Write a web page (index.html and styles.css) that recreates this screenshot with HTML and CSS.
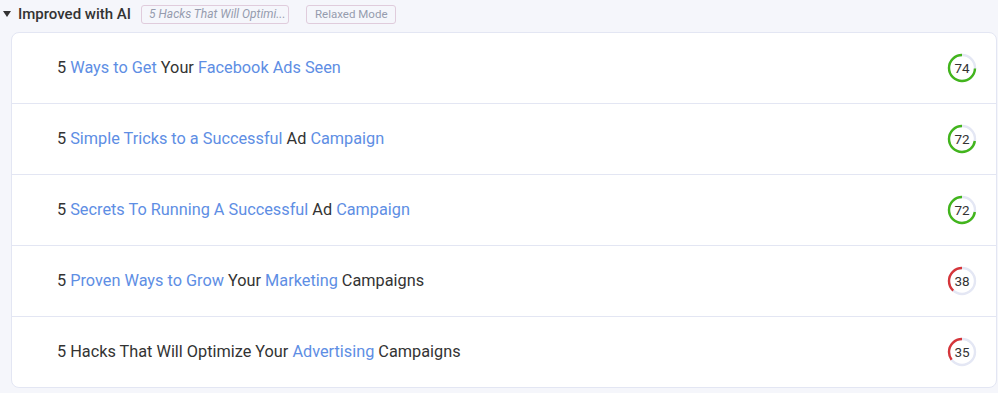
FILE: index.html
```html
<!DOCTYPE html>
<html lang="en">
<head>
    <meta charset="UTF-8">
    <meta name="viewport" content="width=device-width, initial-scale=1.0">
    <title>Improved with AI</title>
    <link rel="stylesheet" href="styles.css">
</head>
<body>

    <div class="head">
        <span class="caret"></span>
        <h3 class="title">Improved with AI</h3>
        <span class="tag tag-source">5 Hacks That Will Optimi...</span>
        <span class="tag tag-mode">Relaxed Mode</span>
    </div>

    <div class="card">
        <div class="row">
            <p class="headline">5 <b>Ways to Get</b> Your <b>Facebook Ads Seen</b></p>
            <div class="score good">
                <svg viewBox="0 0 30 30"><circle class="track" cx="15" cy="15" r="13"/><circle class="bar" cx="15" cy="15" r="13" style="stroke-dasharray: 60.4 81.7"/></svg>
                <span>74</span>
            </div>
        </div>
        <div class="row">
            <p class="headline">5 <b>Simple Tricks to a Successful</b> Ad <b>Campaign</b></p>
            <div class="score good">
                <svg viewBox="0 0 30 30"><circle class="track" cx="15" cy="15" r="13"/><circle class="bar" cx="15" cy="15" r="13" style="stroke-dasharray: 58.8 81.7"/></svg>
                <span>72</span>
            </div>
        </div>
        <div class="row">
            <p class="headline">5 <b>Secrets To Running A Successful</b> Ad <b>Campaign</b></p>
            <div class="score good">
                <svg viewBox="0 0 30 30"><circle class="track" cx="15" cy="15" r="13"/><circle class="bar" cx="15" cy="15" r="13" style="stroke-dasharray: 58.8 81.7"/></svg>
                <span>72</span>
            </div>
        </div>
        <div class="row">
            <p class="headline">5 <b>Proven Ways to Grow</b> Your <b>Marketing</b> Campaigns</p>
            <div class="score bad">
                <svg viewBox="0 0 30 30"><circle class="track" cx="15" cy="15" r="13"/><circle class="bar" cx="15" cy="15" r="13" style="stroke-dasharray: 31 81.7"/></svg>
                <span>38</span>
            </div>
        </div>
        <div class="row">
            <p class="headline">5 Hacks That Will Optimize Your <b>Advertising</b> Campaigns</p>
            <div class="score bad">
                <svg viewBox="0 0 30 30"><circle class="track" cx="15" cy="15" r="13"/><circle class="bar" cx="15" cy="15" r="13" style="stroke-dasharray: 28.6 81.7"/></svg>
                <span>35</span>
            </div>
        </div>
    </div>

</body>
</html>
```

FILE: styles.css
```css
body { margin: 0; font-family: Roboto, "Liberation Sans", sans-serif; background: #f5f6fb; color: #333; }

.head { display: flex; align-items: center; height: 28px; padding: 0 0 0 3px; }
.caret { width: 0; height: 0; border-left: 4px solid transparent; border-right: 4px solid transparent; border-top: 6px solid #333; margin-right: 7px; }
.title { margin: 0 10px 0 0; font-size: 15px; font-weight: 500; color: #333; }
.tag { font-size: 11.5px; line-height: 17px; padding: 0 7px; border: 1px solid #e0ccdc; border-radius: 3px; color: #959cae; }
.tag-source { width: 132px; font-size: 12px; font-style: italic; margin-right: 17px; white-space: nowrap; overflow: hidden; }
.tag-mode { padding: 0 8px; }

.card { margin: 4px 1px 0 11px; background: white; border: 1px solid #e3e6f3; border-radius: 8px; }
.row { display: flex; align-items: center; justify-content: space-between; height: 70px; padding: 0 19px 0 45px; border-bottom: 1px solid #e3e6f3; }
.row:last-child { border-bottom: none; }
.headline { margin: 0 0 1px; font-size: 16.3px; color: #333; }
.headline b { font-weight: 400; color: #5e8ee4; }

.score { position: relative; width: 30px; height: 30px; display: flex; align-items: center; justify-content: center; }
.score svg { position: absolute; top: 0; left: 0; width: 30px; height: 30px; transform: scaleX(-1) rotate(-90deg); }
.score circle { fill: none; stroke-width: 2.4; }
.score .track { stroke: #e4e7f4; }
.good .bar { stroke: #42b51c; }
.bad .bar { stroke: #d6363a; }
.score span { position: relative; font-size: 13.5px; color: #333; }
```
